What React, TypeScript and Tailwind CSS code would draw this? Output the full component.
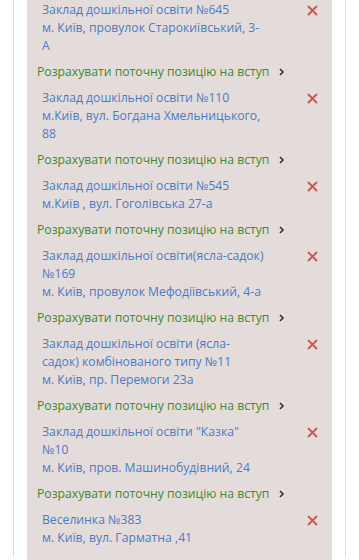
import React from "react";

const items: string[][] = [
  ["Заклад дошкільної освіти №645", "м. Київ, провулок Старокиївський, 3-", "А"],
  ["Заклад дошкільної освіти №110", "м.Київ, вул. Богдана Хмельницького,", "88"],
  ["Заклад дошкільної освіти №545", "м.Київ , вул. Гоголівська 27-а"],
  ["Заклад дошкільної освіти(ясла-садок)", "№169", "м. Київ, провулок Мефодіївський, 4-а"],
  ["Заклад дошкільної освіти (ясла-", "садок) комбінованого типу №11", "м. Київ, пр. Перемоги 23а"],
  ["Заклад дошкільної освіти \"Казка\"", "№10", "м. Київ, пров. Машинобудівний, 24"],
  ["Веселинка №383", "м. Київ, вул. Гарматна ,41"],
];

function Chevron() {
  return (
    <svg width="8" height="10" viewBox="0 0 8 10" className="ml-[9px]">
      <path d="M2 2 L5 5 L2 8" fill="none" stroke="#333" strokeWidth="1.6" />
    </svg>
  );
}

function Cross() {
  return (
    <svg width="11" height="11" viewBox="0 0 11 11">
      <path d="M1 1 L10 10 M10 1 L1 10" stroke="#d9534f" strokeWidth="2" />
    </svg>
  );
}

export default function App() {
  return (
    <div className="w-[359px] h-[560px] overflow-hidden bg-white" style={{ fontFamily: '"Open Sans", sans-serif' }}>
      <div className="mx-[13px] h-full border-x border-[#dcdcdc] px-[13px]">
        <div className="bg-[#e4dcdb] -mt-[3px] pb-4 text-[12.2px] leading-[18px]">
          {items.map((lines, i) => (
            <div key={i}>
              <div className="flex py-1 pl-[15px] pr-[14px]">
                <div className="flex-1 text-[#4b7bc6]">
                  {lines.map((l, j) => (
                    <div key={j} className="whitespace-nowrap">{l}</div>
                  ))}
                </div>
                <div className="pt-[4px]">
                  <Cross />
                </div>
              </div>
              {i < items.length - 1 && (
                <div className="flex items-center py-1 pl-[10px] text-[#3f8b2c]">
                  <span className="whitespace-nowrap">Розрахувати поточну позицію на вступ</span>
                  <Chevron />
                </div>
              )}
            </div>
          ))}
        </div>
      </div>
    </div>
  );
}
